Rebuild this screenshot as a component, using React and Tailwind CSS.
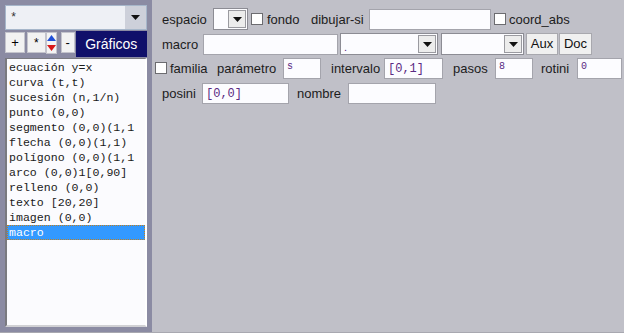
import React from "react";

const sans = { fontFamily: '"Liberation Sans", Arial, sans-serif' };
const mono = { fontFamily: '"Liberation Mono", "Courier New", monospace' };

const items = [
  "ecuación y=x",
  "curva (t,t)",
  "sucesión (n,1/n)",
  "punto (0,0)",
  "segmento (0,0)(1,1",
  "flecha (0,0)(1,1)",
  "polígono (0,0)(1,1",
  "arco (0,0)1[0,90]",
  "relleno (0,0)",
  "texto [20,20]",
  "imagen (0,0)",
  "macro",
];

const Tri = ({ className = "" }) => (
  <svg width="9" height="5" viewBox="0 0 9 5" className={className}>
    <path d="M0 0h9L4.5 5z" fill="#111" />
  </svg>
);

const Label = ({ w, pl, children }) => (
  <span
    className="shrink-0 text-[13px] text-[#1c1c1c] whitespace-nowrap leading-none"
    style={{ ...sans, width: w, paddingLeft: pl }}
  >
    {children}
  </span>
);

const Field = ({ w, value, small }) => (
  <div
    className="shrink-0 h-[21px] bg-[#fcfcff] border border-[#a4a4ac] flex pl-[3px] overflow-hidden"
    style={{ width: w }}
  >
    {value && (
      <span
        className={
          small
            ? "text-[10px] text-[#5a2a82] leading-none pt-[3px]"
            : "text-[12px] text-[#5a2a82] leading-none pt-[4px]"
        }
        style={mono}
      >
        {value}
      </span>
    )}
  </div>
);

const Check = () => (
  <div className="shrink-0 w-[12px] h-[12px] bg-white border border-[#6c6c70]" />
);

const Select = ({ w, value }) => (
  <div
    className="shrink-0 h-[22px] bg-[#fcfcff] border border-[#8c8c94] flex items-stretch"
    style={{ width: w }}
  >
    <div className="flex-1 pl-[3px] text-[11px] text-[#5a2a82] leading-none pt-[8px]" style={sans}>
      {value}
    </div>
    <div className="w-[18px] m-[1px] bg-[#ececec] border border-[#9a9aa0] flex items-center justify-center">
      <Tri />
    </div>
  </div>
);

const Btn = ({ w, children }) => (
  <div
    className="shrink-0 h-[22px] bg-[#f0f0f0] border border-[#a8a8ae] flex items-center justify-center text-[13px] text-[#111]"
    style={{ ...sans, width: w }}
  >
    {children}
  </div>
);

export default function App() {
  return (
    <div className="w-[624px] h-[333px] flex flex-col bg-[#a8a8b0] overflow-hidden">
      <div className="h-[332px] flex">
        {/* left panel */}
        <div className="w-[152px] bg-[#8b8ba3] pl-[5px] pr-[5px] pt-[5px] pb-[5px] flex flex-col">
          <div className="h-[25px] w-[142px] flex bg-[#eef0f5] border border-[#a6b6ca]">
            <div className="flex-1 pl-[4px] pt-[6px] text-[12px] leading-none text-[#333]" style={mono}>
              *
            </div>
            <div className="w-[21px] bg-[#cdd0da] flex items-center justify-center">
              <Tri />
            </div>
          </div>
          <div className="h-[26px] mt-[1px] flex items-stretch">
            <div className="w-[20px] h-[21px] mt-[1px] bg-[#f2f2f2] border border-[#c4c4cc] flex items-center justify-center text-[13px]" style={sans}>
              +
            </div>
            <div className="w-[19px] h-[21px] mt-[1px] ml-[2px] bg-[#f2f2f2] border border-[#c4c4cc] flex items-center justify-center text-[12px]" style={sans}>
              *
            </div>
            <div className="w-[11px] h-[22px] mt-[1px] bg-[#f4f4f4] border border-[#c4c4cc] flex flex-col items-center justify-around">
              <svg width="9" height="6" viewBox="0 0 9 6"><path d="M0 6h9L4.5 0z" fill="#2050d8" /></svg>
              <svg width="9" height="6" viewBox="0 0 9 6"><path d="M0 0h9L4.5 6z" fill="#d81818" /></svg>
            </div>
            <div className="w-[14px] h-[21px] mt-[1px] ml-[4px] bg-[#f2f2f2] border border-[#c4c4cc] flex items-center justify-center text-[13px]" style={sans}>
              -
            </div>
            <div className="w-[72px] ml-[1px] bg-[#10106a] text-white text-[14px] flex items-center justify-center" style={sans}>
              Gráficos
            </div>
          </div>
          <div className="mt-[1px] w-[142px] flex-1 bg-[#fbfbfe] border-l-2 border-t border-[#7a7a80] border-r-2 border-r-white border-b-2 border-b-[#d0d0d4] pt-[1px] overflow-hidden">
            {items.map((it, i) => (
              <div
                key={i}
                className={
                  i === items.length - 1
                    ? "h-[15px] pl-[1px] text-[11.6px] leading-[13px] whitespace-nowrap bg-[#3399ff] text-white border border-dotted border-[#c08020]"
                    : "h-[15px] pl-[2px] text-[11.6px] leading-[15px] whitespace-nowrap text-[#1a1a1a]"
                }
                style={mono}
              >
                {it}
              </div>
            ))}
          </div>
        </div>

        {/* right panel */}
        <div className="flex-1 bg-[#c0c0c8] flex flex-col">
          <div className="mt-[8px] h-[22px] flex items-center">
            <Label w={61} pl={10}>espacio</Label>
            <Select w={35} />
            <div className="w-[3px]" />
            <Check />
            <Label w={48} pl={4}>fondo</Label>
            <Label w={58} pl={0}>dibujar-si</Label>
            <Field w={122} />
            <div className="w-[3px]" />
            <Check />
            <Label w={80} pl={3}>coord_abs</Label>
          </div>
          <div className="mt-[3px] h-[22px] flex items-center">
            <Label w={51} pl={10}>macro</Label>
            <Field w={135} />
            <div className="w-[2px]" />
            <Select w={98} value="." />
            <div className="w-[3px]" />
            <Select w={83} />
            <div className="w-[2px]" />
            <Btn w={32}>Aux</Btn>
            <div className="w-[1px]" />
            <Btn w={33}>Doc</Btn>
          </div>
          <div className="mt-[2px] h-[22px] flex items-center">
            <div className="w-[3px]" />
            <Check />
            <Label w={50} pl={3}>familia</Label>
            <Label w={66} pl={0}>parámetro</Label>
            <Field w={38} value="s" small />
            <Label w={63} pl={10}>intervalo</Label>
            <Field w={59} value="[0,1]" />
            <Label w={52} pl={10}>pasos</Label>
            <Field w={38} value="8" small />
            <Label w={44} pl={8}>rotini</Label>
            <Field w={45} value="0" small />
          </div>
          <div className="mt-[3px] h-[22px] flex items-center">
            <Label w={50} pl={10}>posini</Label>
            <Field w={87} value="[0,0]" />
            <Label w={59} pl={8}>nombre</Label>
            <Field w={88} />
          </div>
        </div>
      </div>
    </div>
  );
}
